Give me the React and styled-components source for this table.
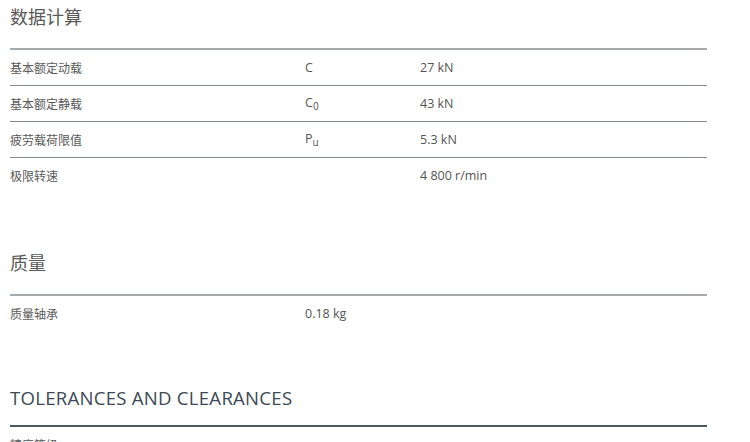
import React from "react";
import styled, { createGlobalStyle } from "styled-components";

const Global = createGlobalStyle`
  html, body { margin: 0; padding: 0; background: #fff; }
  body { font-family: "Noto Sans", "Noto Sans CJK SC", sans-serif; color: #555; }
`;

const Page = styled.div`
  width: 697px;
  padding: 0 0 0 10px;
  display: flex;
  flex-direction: column;
`;

const Section = styled.section`
  display: flex;
  flex-direction: column;
  margin-top: ${(p) => p.$top}px;
`;

const Heading = styled.h2`
  margin: 0;
  height: 50px;
  padding-top: ${(p) => (p.$latin ? 7 : 2)}px;
  box-sizing: border-box;
  font-size: ${(p) => (p.$latin ? "18.6px" : "18px")};
  letter-spacing: ${(p) => (p.$latin ? "0.25px" : "0")};
  font-weight: 400;
  line-height: 28px;
  color: ${(p) => (p.$latin ? "#3c4a55" : "#5a5a5a")};
  font-family: ${(p) =>
    p.$latin ? '"Open Sans", "Noto Sans", sans-serif' : '"Noto Sans CJK SC", sans-serif'};
  border-bottom: 2px solid ${(p) => (p.$latin ? "#4b5a63" : "#a3abb0")};
`;

const Row = styled.div`
  display: grid;
  grid-template-columns: 295px 115px 1fr;
  align-items: center;
  height: 35px;
  border-bottom: ${(p) => (p.$last ? "1px solid transparent" : "1px solid #7f8a91")};
  color: #555;
`;

const Label = styled.span`
  font-family: "Noto Sans CJK SC", sans-serif;
  font-size: 12px;
  color: #5a5a5a;
`;

const Cell = styled.span`
  font-family: "Open Sans", "Noto Sans", sans-serif;
  font-size: 12.5px;
  color: #555;
`;

const Sub = styled.sub`
  font-size: 10px;
  vertical-align: -3px;
`;

const calc = [
  { label: "基本额定动载", sym: "C", sub: null, val: "27 kN" },
  { label: "基本额定静载", sym: "C", sub: "0", val: "43 kN" },
  { label: "疲劳载荷限值", sym: "P", sub: "u", val: "5.3 kN" },
  { label: "极限转速", sym: "", sub: null, val: "4 800 r/min" },
];

export default function App() {
  return (
    <>
      <Global />
      <Page>
        <Section $top={0}>
          <Heading>数据计算</Heading>
          {calc.map((r, i) => (
            <Row key={r.label} $last={i === calc.length - 1}>
              <Label>{r.label}</Label>
              <Cell>
                {r.sym}
                {r.sub && <Sub>{r.sub}</Sub>}
              </Cell>
              <Cell>{r.val}</Cell>
            </Row>
          ))}
        </Section>
        <Section $top={52}>
          <Heading>质量</Heading>
          <Row $last>
            <Label>质量轴承</Label>
            <Cell>0.18 kg</Cell>
            <span />
          </Row>
        </Section>
        <Section $top={45}>
          <Heading $latin>TOLERANCES AND CLEARANCES</Heading>
          <Row $last>
            <Label>精度等级</Label>
            <Cell />
            <span />
          </Row>
        </Section>
      </Page>
    </>
  );
}
